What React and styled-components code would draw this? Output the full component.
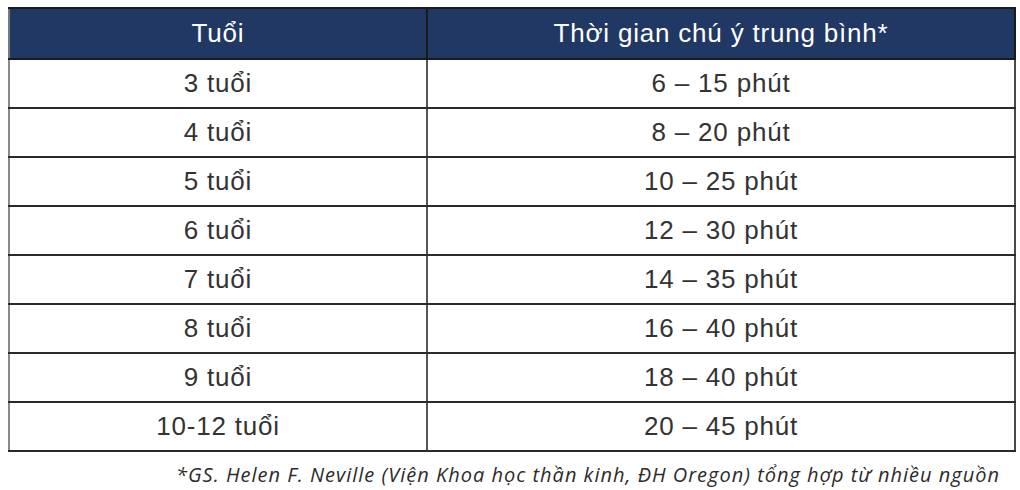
import React from 'react';
import styled, { createGlobalStyle } from 'styled-components';

const GlobalStyle = createGlobalStyle`
  html, body {
    margin: 0;
    padding: 0;
    background: #ffffff;
  }
`;

const Page = styled.div`
  width: 1020px;
  height: 490px;
  padding: 7px 6px 0 8px;
  box-sizing: border-box;
  display: flex;
  flex-direction: column;
`;

const Table = styled.table`
  width: 1006px;
  border-collapse: collapse;
  table-layout: fixed;
  font-family: "Liberation Sans", Arial, sans-serif;
  font-size: 26px;
  letter-spacing: 0.8px;
`;

const HeadCell = styled.th`
  height: 49px;
  padding: 0;
  background: #213864;
  color: #ffffff;
  font-weight: normal;
  text-align: center;
  border: 2px solid #1b1b1b;
  border-left-color: #7a7a7a;
`;

const Cell = styled.td`
  height: 47px;
  padding: 0;
  color: #333333;
  text-align: center;
  border: 2px solid #2a2a2a;
  border-left-color: ${p => (p.$first ? '#8a8a8a' : '#3a3a3a')};
  border-right-color: ${p => (p.$first ? '#555555' : '#4a4a4a')};
`;

const Note = styled.div`
  margin-top: 9px;
  padding-right: 14px;
  text-align: right;
  font-family: "Open Sans", "Noto Sans", sans-serif;
  font-style: italic;
  font-weight: 500;
  font-size: 20px;
  letter-spacing: 1px;
  color: #2b2b2b;
`;

const rows = [
  ['3 tuổi', '6 – 15 phút'],
  ['4 tuổi', '8 – 20 phút'],
  ['5 tuổi', '10 – 25 phút'],
  ['6 tuổi', '12 – 30 phút'],
  ['7 tuổi', '14 – 35 phút'],
  ['8 tuổi', '16 – 40 phút'],
  ['9 tuổi', '18 – 40 phút'],
  ['10-12 tuổi', '20 – 45 phút'],
];

export default function App() {
  return (
    <>
      <GlobalStyle />
      <Page>
        <Table>
          <colgroup>
            <col style={{ width: 418 }} />
            <col style={{ width: 588 }} />
          </colgroup>
          <thead>
            <tr>
              <HeadCell>Tuổi</HeadCell>
              <HeadCell>Thời gian chú ý trung bình*</HeadCell>
            </tr>
          </thead>
          <tbody>
            {rows.map(([age, time]) => (
              <tr key={age}>
                <Cell $first>{age}</Cell>
                <Cell>{time}</Cell>
              </tr>
            ))}
          </tbody>
        </Table>
        <Note>*GS. Helen F. Neville (Viện Khoa học thần kinh, ĐH Oregon) tổng hợp từ nhiều nguồn</Note>
      </Page>
    </>
  );
}
